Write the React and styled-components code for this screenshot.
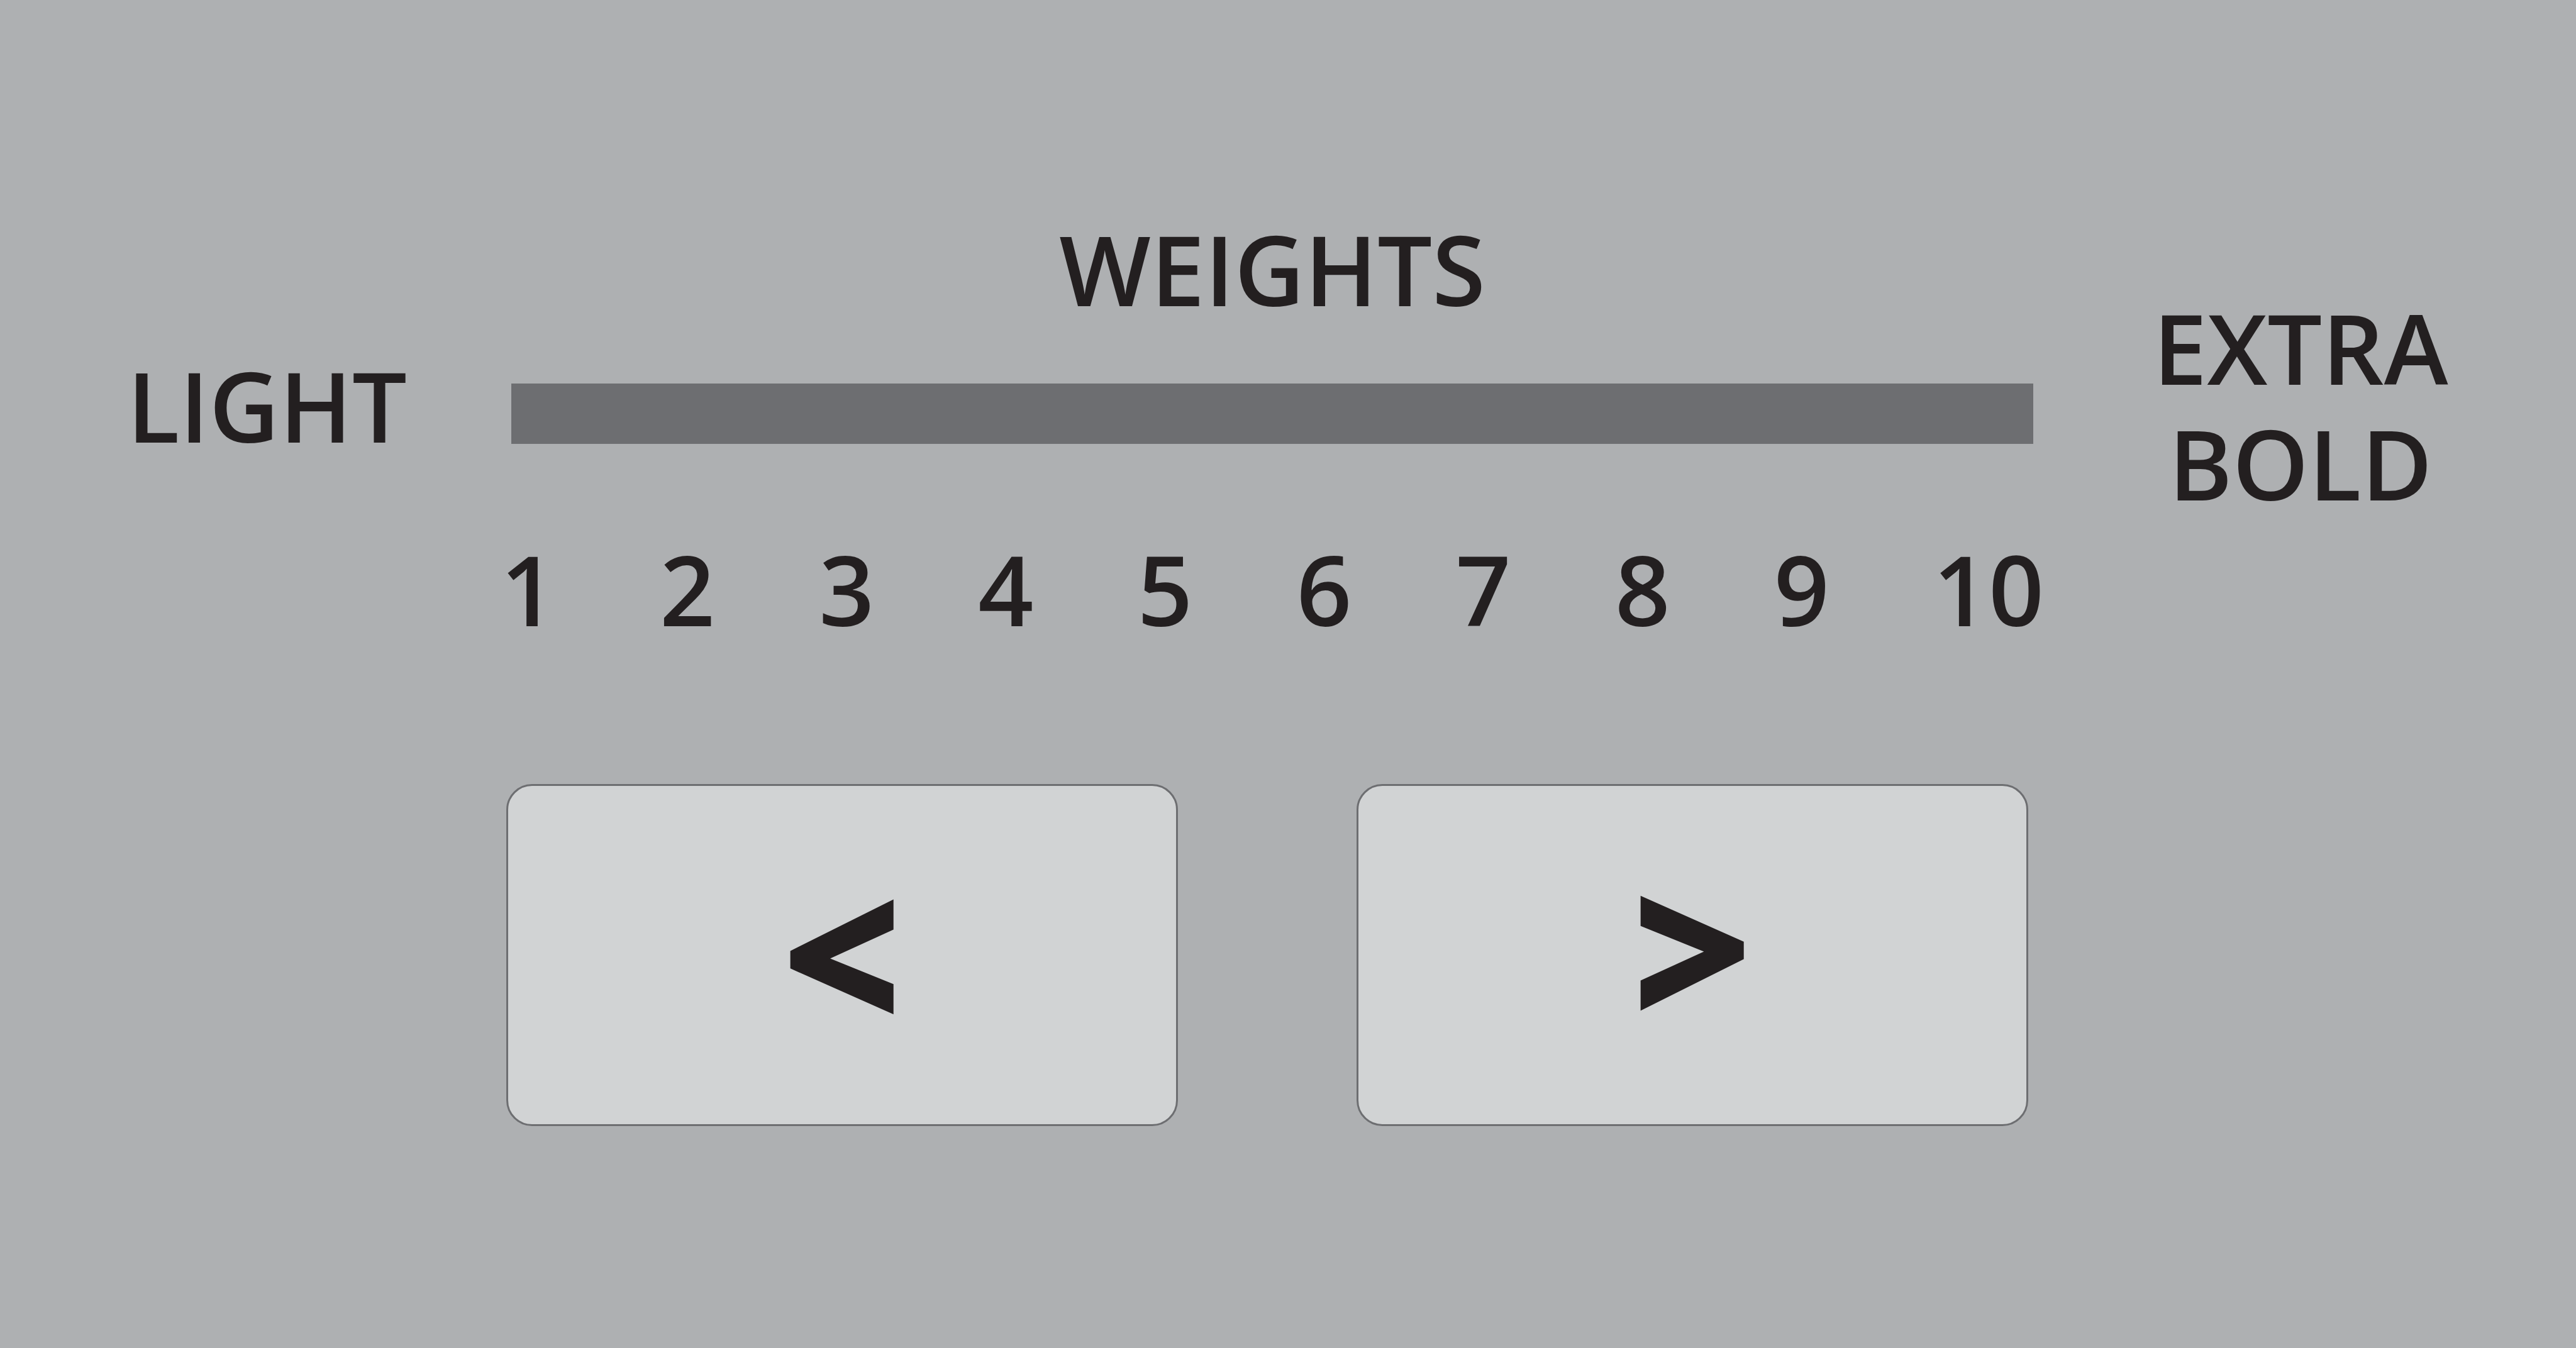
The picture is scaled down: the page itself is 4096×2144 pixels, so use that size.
import React, { useState } from "react";
import styled, { createGlobalStyle } from "styled-components";

const GlobalStyle = createGlobalStyle`
  * { box-sizing: border-box; }
  body {
    margin: 0;
    background: #aeb0b2;
    color: #231f20;
    font-family: "Open Sans", "Noto Sans", sans-serif;
  }
`;

const Page = styled.main`
  display: grid;
  grid-template-columns: 743fr 2454fr 816fr;
  align-items: start;
  min-height: 100vh;
  padding: 335px 30px 335px 53px;
  font-size: 154px;
  font-weight: 600;
  line-height: 184px;
`;

const EndLabel = styled.div`
  display: flex;
  flex-direction: column;
  align-items: center;
  justify-content: center;
  min-height: 368px;
  margin-top: 125px;
`;

const Control = styled.section`
  display: flex;
  flex-direction: column;
`;

const Title = styled.label`
  text-align: center;
`;

const Track = styled.input`
  appearance: none;
  height: 96px;
  margin: 91px 17px 138px;
  background: #6d6e71;
  border: 0;
  border-radius: 0;
  cursor: pointer;

  &::-webkit-slider-thumb {
    appearance: none;
    width: 96px;
    height: 96px;
    background: transparent;
  }
`;

const Scale = styled.ol`
  display: flex;
  justify-content: space-between;
  margin: 0;
  padding: 0;
  list-style: none;
`;

const Steps = styled.div`
  display: flex;
  gap: 284px;
  margin-top: 219px;
  padding: 0 25px 0 9px;
`;

const StepButton = styled.button`
  flex: 1;
  height: 544px;
  padding: 0 0 12px;
  background: #d1d3d4;
  border: 3px solid #6d6e71;
  border-radius: 41px;
  color: inherit;
  font: inherit;
  font-size: 332px;
  font-weight: 800;
  line-height: 1;
  cursor: pointer;
  transform: ${({ $mirrored }) => ($mirrored ? "scaleY(-1)" : "none")};
`;

const WEIGHTS = [1, 2, 3, 4, 5, 6, 7, 8, 9, 10];

export default function App() {
  const [weight, setWeight] = useState(5);

  return (
    <>
      <GlobalStyle />
      <Page>
        <EndLabel>LIGHT</EndLabel>
        <Control>
          <Title htmlFor="weight">WEIGHTS</Title>
          <Track
            id="weight"
            type="range"
            min={1}
            max={10}
            value={weight}
            onChange={(e) => setWeight(Number(e.target.value))}
          />
          <Scale>
            {WEIGHTS.map((n) => (
              <li key={n}>{n}</li>
            ))}
          </Scale>
          <Steps>
            <StepButton type="button" onClick={() => setWeight((w) => Math.max(1, w - 1))}>
              &lt;
            </StepButton>
            <StepButton
              type="button"
              $mirrored
              onClick={() => setWeight((w) => Math.min(10, w + 1))}
            >
              &gt;
            </StepButton>
          </Steps>
        </Control>
        <EndLabel>
          <span>EXTRA</span>
          <span>BOLD</span>
        </EndLabel>
      </Page>
    </>
  );
}
